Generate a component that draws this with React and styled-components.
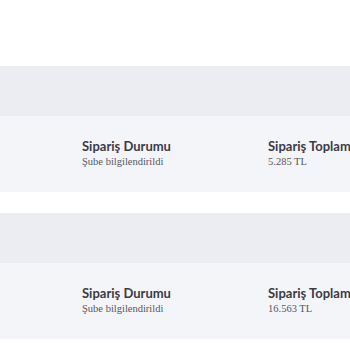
import React from 'react';
import styled, { createGlobalStyle } from 'styled-components';

const GlobalStyle = createGlobalStyle`
  html, body {
    margin: 0;
    padding: 0;
    background: #ffffff;
    overflow: hidden;
  }
`;

const Page = styled.div`
  width: 350px;
  height: 350px;
  padding-top: 66px;
  box-sizing: border-box;
  display: flex;
  flex-direction: column;
  gap: 21px;
  overflow: hidden;
`;

const OrderCard = styled.div`
  display: flex;
  flex-direction: column;
`;

const CardHeader = styled.div`
  height: 50px;
  background: #ecedf2;
`;

const CardBody = styled.div`
  height: 76px;
  background: #f4f5f9;
  display: flex;
  padding: 22px 0 0 82px;
  box-sizing: border-box;
`;

const Info = styled.div`
  flex: 0 0 186px;
  white-space: nowrap;
`;

const Label = styled.div`
  font-family: Lato, 'Liberation Sans', sans-serif;
  font-weight: 700;
  font-size: 13px;
  line-height: 16px;
  color: #3b3b45;
`;

const Value = styled.div`
  font-family: 'Liberation Serif', serif;
  font-size: 10.5px;
  line-height: 14px;
  color: #55555d;
  margin-top: 1px;
`;

const orders = [
  { id: 1, status: 'Şube bilgilendirildi', total: '5.285 TL' },
  { id: 2, status: 'Şube bilgilendirildi', total: '16.563 TL' },
];

const App = () => (
  <>
    <GlobalStyle />
    <Page>
      {orders.map((order) => (
        <OrderCard key={order.id}>
          <CardHeader />
          <CardBody>
            <Info>
              <Label>Sipariş Durumu</Label>
              <Value>{order.status}</Value>
            </Info>
            <Info>
              <Label>Sipariş Toplamı</Label>
              <Value>{order.total}</Value>
            </Info>
          </CardBody>
        </OrderCard>
      ))}
    </Page>
  </>
);

export default App;
